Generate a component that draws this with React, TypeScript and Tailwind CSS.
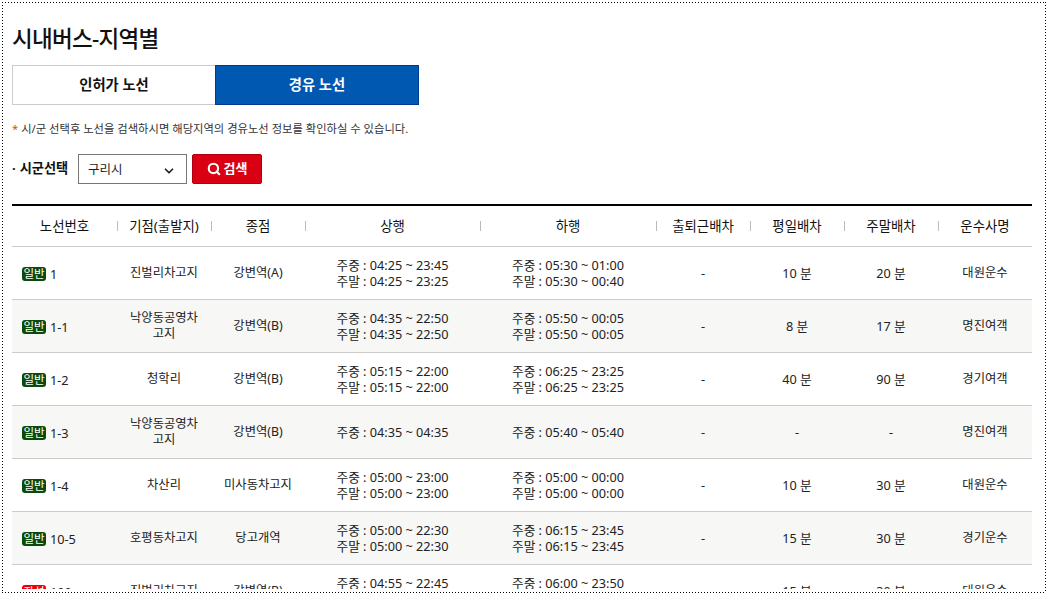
import React from "react";
import { Search, ChevronDown } from "lucide-react";

const heads = ["노선번호", "기점(출발지)", "종점", "상행", "하행", "출퇴근배차", "평일배차", "주말배차", "운수사명"];
const grid = "grid grid-cols-[105px_94px_94px_175px_176px_94px_94px_94px_94px]";

type Row = { no: string; red?: boolean; from: string; to: string; up: string[]; down: string[]; rush: string; wk: string; we: string; co: string };
const rows: Row[] = [
  { no: "1", from: "진벌리차고지", to: "강변역(A)", up: ["주중 : 04:25 ~ 23:45", "주말 : 04:25 ~ 23:25"], down: ["주중 : 05:30 ~ 01:00", "주말 : 05:30 ~ 00:40"], rush: "-", wk: "10 분", we: "20 분", co: "대원운수" },
  { no: "1-1", from: "낙양동공영차고지", to: "강변역(B)", up: ["주중 : 04:35 ~ 22:50", "주말 : 04:35 ~ 22:50"], down: ["주중 : 05:50 ~ 00:05", "주말 : 05:50 ~ 00:05"], rush: "-", wk: "8 분", we: "17 분", co: "명진여객" },
  { no: "1-2", from: "청학리", to: "강변역(B)", up: ["주중 : 05:15 ~ 22:00", "주말 : 05:15 ~ 22:00"], down: ["주중 : 06:25 ~ 23:25", "주말 : 06:25 ~ 23:25"], rush: "-", wk: "40 분", we: "90 분", co: "경기여객" },
  { no: "1-3", from: "낙양동공영차고지", to: "강변역(B)", up: ["주중 : 04:35 ~ 04:35"], down: ["주중 : 05:40 ~ 05:40"], rush: "-", wk: "-", we: "-", co: "명진여객" },
  { no: "1-4", from: "차산리", to: "미사동차고지", up: ["주중 : 05:00 ~ 23:00", "주말 : 05:00 ~ 23:00"], down: ["주중 : 05:00 ~ 00:00", "주말 : 05:00 ~ 00:00"], rush: "-", wk: "10 분", we: "30 분", co: "대원운수" },
  { no: "10-5", from: "호평동차고지", to: "당고개역", up: ["주중 : 05:00 ~ 22:30", "주말 : 05:00 ~ 22:30"], down: ["주중 : 06:15 ~ 23:45", "주말 : 06:15 ~ 23:45"], rush: "-", wk: "15 분", we: "30 분", co: "경기운수" },
  { no: "100", red: true, from: "진벌리차고지", to: "강변역(B)", up: ["주중 : 04:55 ~ 22:45", "주말 : 04:55 ~ 22:45"], down: ["주중 : 06:00 ~ 23:50", "주말 : 06:00 ~ 23:50"], rush: "-", wk: "15 분", we: "30 분", co: "대원운수" },
];

const dotsX = "absolute h-px bg-[repeating-linear-gradient(90deg,#000_0,#000_1px,transparent_1px,transparent_3px)]";
const dotsY = "absolute w-px bg-[repeating-linear-gradient(180deg,#000_0,#000_1px,transparent_1px,transparent_3px)]";

export default function App() {
  return (
    <div className="relative h-[595px] w-[1048px] overflow-hidden bg-white p-[2px] font-['Noto_Sans','Noto_Sans_CJK_KR',sans-serif] text-[12.7px] text-[#222]">
      <span className={`${dotsX} top-[2px] left-[2px] w-[1044px]`} />
      <span className={`${dotsX} top-[592px] left-[2px] w-[1044px]`} />
      <span className={`${dotsY} top-[2px] left-[2px] h-[591px]`} />
      <span className={`${dotsY} top-[2px] left-[1045px] h-[591px]`} />
      <div className="ml-px mt-px h-[586px] w-[1042px] overflow-hidden pr-[13px] pl-[9px]">
        <h1 className="mt-[18px] h-[36px] text-[22.5px] leading-[36px] font-medium tracking-[-0.7px] text-[#111]">시내버스-지역별</h1>
        <div className="mt-[8px] flex h-[40px] w-[407px] text-[14.3px] font-bold">
          <div className="flex w-[203px] items-center justify-center border border-r-0 border-[#ccc] text-[#111]">인허가 노선</div>
          <div className="flex w-[204px] items-center justify-center border border-[#003a8c] bg-[#0058b0] text-white">경유 노선</div>
        </div>
        <p className="mt-[14px] h-[20px] text-[11.3px] leading-[20px] text-[#333]"><span className="text-[#d35400]">*</span> 시/군 선택후 노선을 검색하시면 해당지역의 경유노선 정보를 확인하실 수 있습니다.</p>
        <div className="mt-[15px] flex h-[30px] items-center">
          <span className="flex w-[66px] items-center gap-[4px] text-[13.2px] font-bold text-[#111]"><span>·</span><span>시군선택</span></span>
          <div className="flex h-[30px] w-[109px] items-center justify-between border border-[#767676] pt-[3px] pr-[10px] pl-[9px] text-[12.5px]">
            구리시
            <ChevronDown size={14} strokeWidth={3} className="text-[#222]" />
          </div>
          <button className="ml-[5px] flex h-[30px] w-[70px] items-center justify-center gap-[3px] rounded-[2px] border border-[#b00010] bg-[#d80012] text-[13px] font-bold text-white">
            <Search size={14} strokeWidth={3.6} />
            검색
          </button>
        </div>
        <div className="mt-[20px] border-t-2 border-black">
          <div className={`${grid} h-[41px] items-center border-b border-[#ccc] text-[13.4px] text-[#111]`}>
            {heads.map((h, i) => (
              <div key={h} className="relative text-center">
                {i > 0 && <span className="absolute top-[5px] left-0 h-[10px] w-px bg-[#bbb]" />}
                {h}
              </div>
            ))}
          </div>
          {rows.map((r, i) => (
            <div key={r.no} className={`${grid} h-[53px] items-center border-b border-[#ccc] text-center leading-[16px] ${i % 2 === 1 ? "bg-[#f7f7f5]" : "bg-white"}`}>
              <div className="flex items-center gap-[4px] pt-[2px] pl-[10px] text-left">
                <span className={`flex h-[14px] w-[24px] items-center justify-center rounded-[3px] text-[11.5px] text-white ${r.red ? "bg-[#f00000]" : "bg-[#0b4a0b]"}`}>{r.red ? "좌석" : "일반"}</span>
                {r.no}
              </div>
              <div className="px-[10px] text-[12.3px]">{r.from}</div>
              <div className="text-[12.3px]">{r.to}</div>
              <div>{r.up.map((t) => <div key={t}>{t}</div>)}</div>
              <div>{r.down.map((t) => <div key={t}>{t}</div>)}</div>
              <div>{r.rush}</div>
              <div>{r.wk}</div>
              <div>{r.we}</div>
              <div className="text-[12.3px]">{r.co}</div>
            </div>
          ))}
        </div>
      </div>
    </div>
  );
}
